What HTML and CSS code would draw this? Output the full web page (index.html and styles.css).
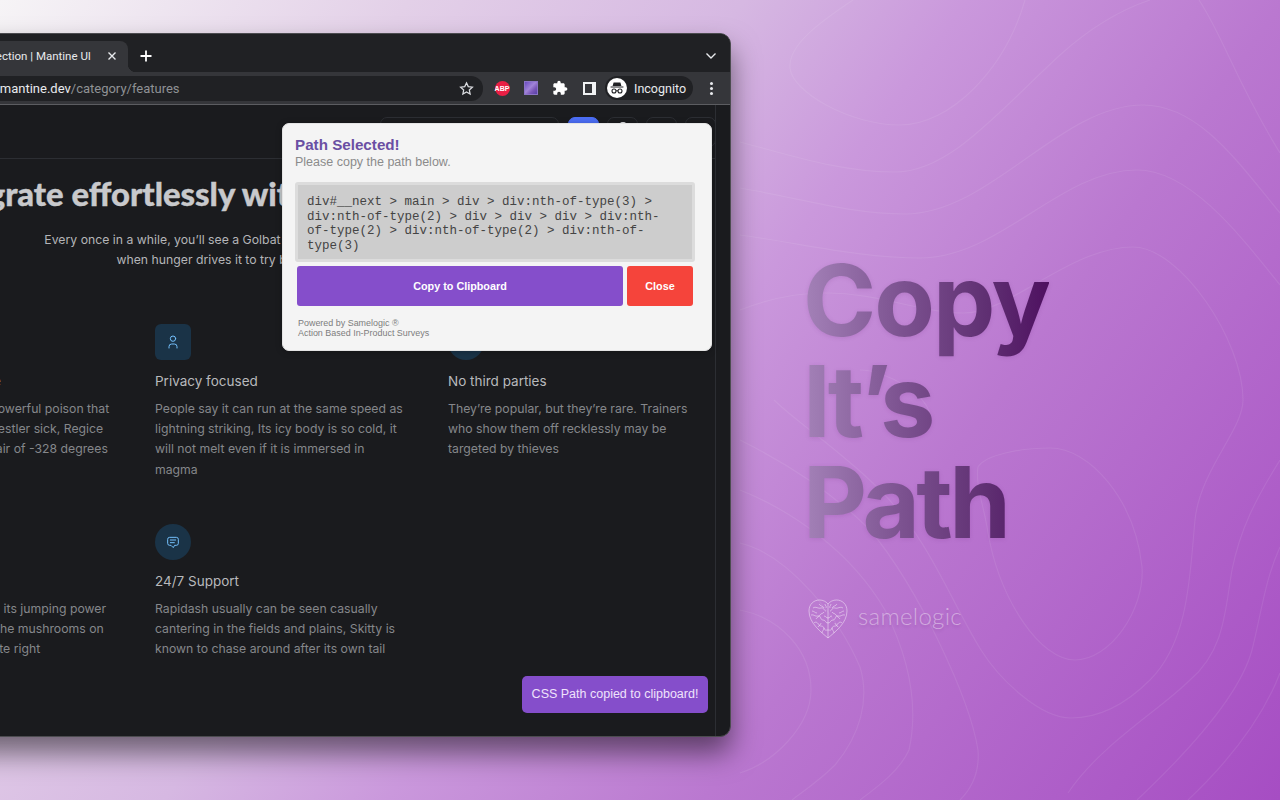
FILE: index.html
```html
<!DOCTYPE html>
<html lang="en">

<head>
    <meta charset="UTF-8">
    <title>Copy It's Path - Samelogic</title>
    <link rel="stylesheet" href="styles.css">
</head>

<body>
    <div class="stage">
        <!-- contour lines behind everything -->
        <svg class="contours" width="1280" height="800" viewBox="0 0 1280 800" fill="none">
            <path d="M853 0C820 22 788 45 790 68C792 92 850 125 900 125C950 125 1005 70 1025 0"/>
            <path d="M740 142C790 155 840 172 895 172C950 172 1000 110 1060 55C1090 28 1120 10 1150 0"/>
            <path d="M740 188C800 198 850 214 905 214C990 214 1060 105 1143 105C1200 105 1240 165 1280 213"/>
            <path d="M740 235C800 243 860 258 920 258C1000 258 1060 170 1137 170C1190 170 1240 235 1280 285"/>
            <path d="M740 310C770 298 800 293 826 293C880 293 920 313 964 313C1010 313 1070 247 1133 247C1180 247 1243 340 1243 400C1243 430 1200 470 1195 520C1190 570 1190 640 1150 680C1125 705 1100 718 1071 718C1040 718 1000 680 981 650C950 600 930 540 880 490C840 450 800 425 774 400"/>
            <path d="M978 467C985 455 1020 448 1050 448C1090 448 1135 500 1142 567C1145 610 1110 660 1075 660C1040 660 1000 600 988 533C985 510 975 485 978 467Z"/>
            <path d="M1280 460C1255 500 1240 530 1232 570C1225 610 1225 650 1190 680C1160 710 1100 745 1068 793"/>
            <path d="M1280 547C1265 580 1262 610 1252 650C1240 695 1190 750 1137 800"/>
            <path d="M1280 673C1262 720 1225 765 1188 800"/>
            <path d="M1199 0C1225 40 1235 80 1280 153"/>
            <path d="M740 440C780 460 830 490 870 530C920 590 970 700 978 750C980 775 970 790 960 800"/>
            <path d="M740 490C790 510 850 550 885 610C905 650 920 700 909 750C900 770 880 785 860 800"/>
            <path d="M740 543C790 555 840 620 860 667C870 700 860 735 835 765C820 780 805 790 792 800"/>
            <path d="M740 610C780 618 811 650 811 690C811 725 775 762 740 773"/>
            <path d="M860 370C885 370 930 395 930 417"/>
        </svg>

        <div class="browser">
            <div class="tabstrip">
                <div class="tab">
                    <span class="tabTitle">Feature section | Mantine UI</span>
                    <svg class="tabClose" width="10" height="10" viewBox="0 0 10 10">
                        <path d="M1.5 1.5l7 7M8.5 1.5l-7 7"/>
                    </svg>
                </div>
                <svg class="newTab" width="12" height="12" viewBox="0 0 12 12">
                    <path d="M6 .5v11M.5 6h11"/>
                </svg>
                <svg class="tabSearch" width="12" height="8" viewBox="0 0 12 8">
                    <path d="M1.5 1.5L6 6l4.5-4.5"/>
                </svg>
            </div>

            <div class="toolbar">
                <div class="address">
                    <span class="url"><b>ui.mantine.dev</b>/category/features</span>
                    <svg class="star" width="15" height="15" viewBox="0 0 24 24">
                        <path d="M12 3l2.800 6 6.600.8-4.900 4.500 1.300 6.500L12 17.500l-5.800 3.300 1.300-6.500L2.600 9.800 9.200 9z"/>
                    </svg>
                </div>
                <div class="toolIcon"><span class="abp">ABP</span></div>
                <div class="toolIcon"><span class="extImage"></span></div>
                <div class="toolIcon">
                    <svg width="16" height="16" viewBox="0 0 24 24" fill="#fff">
                        <path d="M20.500 11H19V7c0-1.100-.9-2-2-2h-4V3.500C13 2.120 11.880 1 10.500 1S8 2.120 8 3.500V5H4c-1.100 0-1.990.9-1.990 2v3.800H3.500c1.490 0 2.700 1.210 2.700 2.700s-1.210 2.700-2.700 2.700H2V20c0 1.100.9 2 2 2h3.800v-1.500c0-1.490 1.210-2.700 2.700-2.700 1.490 0 2.700 1.210 2.700 2.700V22H17c1.100 0 2-.9 2-2v-4h1.500c1.380 0 2.500-1.120 2.500-2.500S21.880 11 20.500 11z"/>
                    </svg>
                </div>
                <div class="toolIcon"><span class="sidePanel"></span></div>
                <div class="incognito">
                    <svg width="20" height="20" viewBox="0 0 20 20">
                        <circle cx="10" cy="10" r="10" fill="#fff"/>
                        <path d="M6.600 4.400h6.800l1 3.600H5.600zM3.600 8.400h12.800v1H3.600z" fill="#202124"/>
                        <circle cx="7" cy="13" r="2" fill="none" stroke="#202124" stroke-width="1.100"/>
                        <circle cx="13" cy="13" r="2" fill="none" stroke="#202124" stroke-width="1.100"/>
                        <path d="M9 12.800h2" stroke="#202124" stroke-width="1"/>
                    </svg>
                    <span>Incognito</span>
                </div>
                <div class="toolIcon menuDots"><i></i><i></i><i></i></div>
            </div>

            <div class="page">
                <div class="pageMain">
                    <div class="siteHeader">
                        <span class="headBtn searchBox"></span>
                        <span class="headBtn blueBtn"></span>
                        <span class="headBtn"><i class="headDot"></i></span>
                        <span class="headBtn"></span>
                        <span class="headBtn"></span>
                    </div>

                    <div class="features">
                        <h2>Integrate effortlessly with any technology stack</h2>
                        <p class="lead">Every once in a while, you’ll see a Golbat that’s missing some fangs. This happens when hunger drives it to try biting a Steel-type Pokémon.</p>

                        <div class="grid">
                            <div class="feature">
                                <div class="featIcon round"></div>
                                <h3>Extreme performance</h3>
                                <p>This dust is actually a powerful poison that will even make a pro wrestler sick, Regice cloaks itself with frigid air of -328 degrees Fahrenheit</p>
                            </div>
                            <div class="feature">
                                <div class="featIcon">
                                    <svg width="16" height="16" viewBox="0 0 24 24">
                                        <circle cx="12" cy="7" r="4"/>
                                        <path d="M6 21v-2a4 4 0 0 1 4-4h4a4 4 0 0 1 4 4v2"/>
                                    </svg>
                                </div>
                                <h3>Privacy focused</h3>
                                <p>People say it can run at the same speed as lightning striking, Its icy body is so cold, it will not melt even if it is immersed in magma</p>
                            </div>
                            <div class="feature">
                                <div class="featIcon round"></div>
                                <h3>No third parties</h3>
                                <p>They’re popular, but they’re rare. Trainers who show them off recklessly may be targeted by thieves</p>
                            </div>
                            <div class="feature">
                                <div class="featIcon round"></div>
                                <h3>Secure by default</h3>
                                <p>Although it still can’t fly, its jumping power is outstanding, in Alola the mushrooms on Paras don’t grow up quite right</p>
                            </div>
                            <div class="feature">
                                <div class="featIcon round">
                                    <svg width="16" height="16" viewBox="0 0 24 24">
                                        <path d="M12 20l-3-3H7a3 3 0 0 1-3-3V8a3 3 0 0 1 3-3h10a3 3 0 0 1 3 3v6a3 3 0 0 1-3 3h-2z"/>
                                        <path d="M8 9h8M8 13h6"/>
                                    </svg>
                                </div>
                                <h3>24/7 Support</h3>
                                <p>Rapidash usually can be seen casually cantering in the fields and plains, Skitty is known to chase around after its own tail</p>
                            </div>
                        </div>
                    </div>
                </div>
                <div class="scrollTrack"></div>
            </div>
        </div>

        <!-- the extension's popup and toast sit on top of the page -->
        <div class="pathModal">
            <h4>Path Selected!</h4>
            <p class="modalSub">Please copy the path below.</p>
            <div class="pathBox">div#__next &gt; main &gt; div &gt; div:nth-of-type(3) &gt; div:nth-of-type(2) &gt; div &gt; div &gt; div &gt; div:nth-of-type(2) &gt; div:nth-of-type(2) &gt; div:nth-of-type(3)</div>
            <div class="modalBtns">
                <button class="copyBtn">Copy to Clipboard</button>
                <button class="closeBtn">Close</button>
            </div>
            <p class="poweredBy">Powered by Samelogic ®<br>Action Based In-Product Surveys</p>
        </div>
        <div class="toast">CSS Path copied to clipboard!</div>

        <div class="promo">
            <h1><span class="wordCopy">Copy</span><br><span class="wordIts">It’s</span><br><span class="wordPath">Path</span></h1>
            <div class="brand">
                <svg class="heart" width="42" height="42" viewBox="0 0 42 42" fill="none">
                    <path d="M21 40C14 34 2 25 2 13C2 6 7 2 12.500 2C16 2 19 3.500 21 6C23 3.500 26 2 29.500 2C35 2 40 6 40 13C40 25 28 34 21 40Z"/>
                    <path d="M21 6V40"/>
                    <path d="M6 10c3-2 5 1 8 0s3 3 5 3M4 17c3-1 4 2 7 1s2 4 5 4 2 3 5 3M7 25c2-2 4 0 5 2s4 0 5 3 2 2 4 2M12 6c1 2 4 2 5 4M9 21c1-2 3-2 4-4s3-1 4-3M15 35c0-2 2-3 2-5M5 13c2 0 3 2 5 2M11 29c1-2 3-2 3-4M18 6c0 2 2 2 1 4M17 18c2 0 2 2 4 2"/>
                    <path d="M36 10c-3-2-5 1-8 0s-3 3-5 3M38 17c-3-1-4 2-7 1s-2 4-5 4-2 3-5 3M35 25c-2-2-4 0-5 2s-4 0-5 3-2 2-4 2M30 6c-1 2-4 2-5 4M33 21c-1-2-3-2-4-4s-3-1-4-3M27 35c0-2-2-3-2-5M37 13c-2 0-3 2-5 2M31 29c-1-2-3-2-3-4M24 6c0 2-2 2-1 4M25 18c-2 0-2 2-4 2"/>
                </svg>
                <span>samelogic</span>
            </div>
        </div>
    </div>
</body>

</html>
```

FILE: styles.css
```css
* {
    box-sizing: border-box;
}

body {
    margin: 0;
    background-color: #c896da;
    font-family: Inter, Arial, sans-serif;
}

.stage {
    position: relative;
    width: 1280px;
    height: 800px;
    overflow: hidden;
    padding: 250px 0 0 803px;
    background: linear-gradient(126deg, #f6f4f6 0%, #e3d0e8 22%, #d6b8e2 40%, #ca98dc 52%, #ba78d0 69%, #a64dc3 100%);
}

.contours {
    position: absolute;
    left: 0;
    top: 0;
}

.contours path {
    stroke: rgba(255, 255, 255, 0.08);
    stroke-width: 1.2;
}

/* Browser window, runs off the left side */
.browser {
    position: absolute;
    left: -153px;
    top: 33px;
    width: 884px;
    height: 704px;
    display: flex;
    flex-direction: column;
    overflow: hidden;
    border: 1px solid #4c4c50;
    border-radius: 11px;
    background-color: #1a1b1e;
    box-shadow: 0 16px 28px rgba(0, 0, 0, 0.5);
}

.tabstrip {
    height: 38px;
    flex-shrink: 0;
    display: flex;
    align-items: flex-end;
    background-color: #202124;
    padding-left: 40px;
}

.tab {
    position: relative;
    width: 240px;
    height: 31px;
    display: flex;
    align-items: center;
    justify-content: flex-end;
    padding: 0 11px 1px 0;
    background-color: #35363a;
    border-radius: 8px 8px 0 0;
}

.tab::after {
    content: "";
    position: absolute;
    right: -8px;
    bottom: 0;
    width: 8px;
    height: 8px;
    background: radial-gradient(circle at 100% 0, transparent 8px, #35363a 8.500px);
}

.tabTitle {
    color: #e8eaed;
    font-family: Roboto, Arial, sans-serif;
    font-size: 11.500px;
    margin: 0 16px 0 0;
}

.tabClose path,
.newTab path,
.tabSearch path {
    fill: none;
    stroke: #e8eaed;
    stroke-width: 1.400;
}

.newTab {
    margin: 0 0 10px 12px;
}

.newTab path {
    stroke-width: 1.800;
    stroke: #fff;
}

.tabSearch {
    margin: 0 13px 12px auto;
}

.toolbar {
    height: 33px;
    flex-shrink: 0;
    display: flex;
    align-items: center;
    gap: 1px;
    padding: 0 5px 0 92px;
    background-color: #35363a;
    border-bottom: 1px solid #5c5d61;
}

.address {
    flex: 1;
    height: 25px;
    display: flex;
    align-items: center;
    justify-content: space-between;
    padding: 0 9px 0 46px;
    margin-right: 4px;
    background-color: #202124;
    border-radius: 12px;
    font-family: Roboto, Arial, sans-serif;
    font-size: 13px;
    color: #8f9195;
}

.url b {
    font-weight: 400;
    color: #e8eaed;
}

.star path {
    fill: none;
    stroke: #dadce0;
    stroke-width: 2;
}

.toolIcon {
    width: 28px;
    height: 28px;
    display: flex;
    align-items: center;
    justify-content: center;
    flex-shrink: 0;
}

.abp {
    width: 15px;
    height: 15px;
    border-radius: 50%;
    background-color: #ea1f45;
    color: #fff;
    font-family: "Liberation Sans", sans-serif;
    font-size: 7px;
    font-weight: 700;
    line-height: 15px;
    text-align: center;
}

.extImage {
    width: 14px;
    height: 14px;
    background: linear-gradient(135deg, #6a4cc0, #a184d8 45%, #7a56b8 70%, #5640a8);
    border: 1px solid #8b74c6;
}

.sidePanel {
    width: 13px;
    height: 13px;
    border: 2px solid #f1f3f4;
    border-right-width: 4px;
}

.incognito {
    width: 88px;
    height: 24px;
    flex-shrink: 0;
    display: flex;
    align-items: center;
    gap: 7px;
    margin: 0 3px 0 1px;
    padding-left: 2px;
    border-radius: 12px;
    background-color: #202124;
    color: #e8eaed;
    font-family: Roboto, Arial, sans-serif;
    font-size: 12.500px;
}

.menuDots {
    flex-direction: column;
    gap: 2px;
}

.menuDots i {
    width: 3px;
    height: 3px;
    border-radius: 50%;
    background-color: #e8eaed;
}

/* Page under the toolbar */
.page {
    flex: 1;
    display: flex;
    min-height: 0;
}

.pageMain {
    flex: 1;
    min-width: 0;
}

.scrollTrack {
    width: 15px;
    border-left: 1px solid #2c2e33;
}

.siteHeader {
    height: 54px;
    display: flex;
    justify-content: flex-end;
    gap: 8px;
    padding: 12px 0 0 0;
    margin-right: -1px;
    border-bottom: 1px solid #2c2e33;
}

.headBtn {
    position: relative;
    width: 31px;
    height: 30px;
    border: 1px solid #2c2e33;
    border-radius: 7px;
}

.searchBox {
    width: 179px;
    margin-right: 1px;
}

.blueBtn {
    background-color: #4c6ef5;
    border-color: #4c6ef5;
}

.headDot {
    position: absolute;
    left: 10px;
    top: 4px;
    width: 10px;
    height: 10px;
    border-radius: 50%;
    background-color: #e8eaed;
}

.features {
    width: 839px;
    margin: 0 auto;
}

h2 {
    margin: 17px 0 0;
    padding-right: 10px;
    font-family: Lato, sans-serif;
    font-size: 32.800px;
    font-weight: 900;
    line-height: 36px;
    text-align: center;
    color: #c8c9cc;
    white-space: nowrap;
    -webkit-text-stroke: 0.4px #c8c9cc;
}

.lead {
    width: 490px;
    margin: 18px auto 0;
    font-size: 12.250px;
    line-height: 20.400px;
    text-align: center;
    color: #b4b5b8;
}

.grid {
    display: grid;
    grid-template-columns: repeat(3, 253px);
    column-gap: 40px;
    margin-top: 53px;
}

.feature {
    height: 200px;
}

.featIcon {
    width: 36px;
    height: 36px;
    display: flex;
    align-items: center;
    justify-content: center;
    border-radius: 6px;
    background-color: #1a3347;
}

.featIcon.round {
    border-radius: 50%;
}

.featIcon svg {
    fill: none;
    stroke: #74c0fc;
    stroke-width: 1.500;
    stroke-linecap: round;
    stroke-linejoin: round;
}

h3 {
    margin: 13px 0 0;
    font-size: 13.500px;
    font-weight: 400;
    line-height: 17px;
    color: #b8b9bc;
}

.feature p {
    margin: 9px 0 0;
    font-size: 12.250px;
    line-height: 20.300px;
    color: #85878b;
}

/* Path popup */
.pathModal {
    position: absolute;
    left: 282px;
    top: 123px;
    width: 430px;
    height: 228px;
    padding: 12px 16px 0 12px;
    background-color: #f4f4f4;
    border: 1px solid #e4e4e4;
    border-radius: 7px;
    font-family: "Liberation Sans", Arial, sans-serif;
    box-shadow: 0 1px 6px rgba(0, 0, 0, 0.25);
}

h4 {
    margin: 0;
    font-size: 15.200px;
    font-weight: 700;
    line-height: 17px;
    color: #6a4fa3;
}

.modalSub {
    margin: 1px 0 0;
    font-size: 12.500px;
    line-height: 16px;
    color: #8b8b8b;
}

.pathBox {
    margin-top: 12px;
    height: 80px;
    padding: 10px 12px 0 9px;
    background-color: #cdcdcd;
    border: 3px solid #dcdcdc;
    border-radius: 3px;
    font-family: "Liberation Mono", monospace;
    font-size: 12.500px;
    line-height: 14.500px;
    color: #444;
}

.modalBtns {
    display: flex;
    gap: 4px;
    margin: 4px 2px 0 2px;
}

.modalBtns button {
    height: 40px;
    border: 0;
    border-radius: 3px;
    color: #fff;
    font-family: "Liberation Sans", Arial, sans-serif;
    font-size: 10.800px;
    font-weight: 700;
}

.copyBtn {
    flex: 1;
    background-color: #854ecb;
}

.closeBtn {
    width: 66px;
    background-color: #f5443b;
}

.poweredBy {
    margin: 12px 0 0 3px;
    font-size: 8.950px;
    line-height: 10px;
    color: #7d7d7d;
}

.toast {
    position: absolute;
    left: 522px;
    top: 676px;
    width: 186px;
    height: 37px;
    display: flex;
    align-items: center;
    justify-content: center;
    padding-bottom: 2px;
    border-radius: 5px;
    background-color: #854ecb;
    color: #efe3fb;
    font-family: "Liberation Sans", Arial, sans-serif;
    font-size: 12.500px;
}

/* Right side */
.promo {
    position: relative;
}

h1 {
    display: inline-block;
    margin: 0;
    font-size: 99px;
    font-weight: 700;
    line-height: 101px;
    background: linear-gradient(90deg, #a482b8 0%, #7c5290 40%, #5f2f72 75%, #4e1060 100%);
    -webkit-background-clip: text;
    background-clip: text;
    color: transparent;
    filter: drop-shadow(0 1px 2px rgba(70, 10, 90, 0.12));
}

.wordCopy {
    letter-spacing: -2px;
}

.wordIts {
    letter-spacing: -4.500px;
}

.wordPath {
    letter-spacing: -3.500px;
}

.brand {
    display: flex;
    align-items: center;
    gap: 9px;
    margin: 45px 0 0 4px;
    color: rgba(255, 255, 255, 0.42);
    font-family: Lato, sans-serif;
    font-size: 24px;
    font-weight: 300;
    letter-spacing: 0.300px;
    text-shadow: 0 2px 3px rgba(70, 10, 90, 0.15);
}

.brand span {
    margin-bottom: 7px;
}

.heart path {
    stroke: rgba(255, 255, 255, 0.55);
    stroke-width: 0.800;
}
```
